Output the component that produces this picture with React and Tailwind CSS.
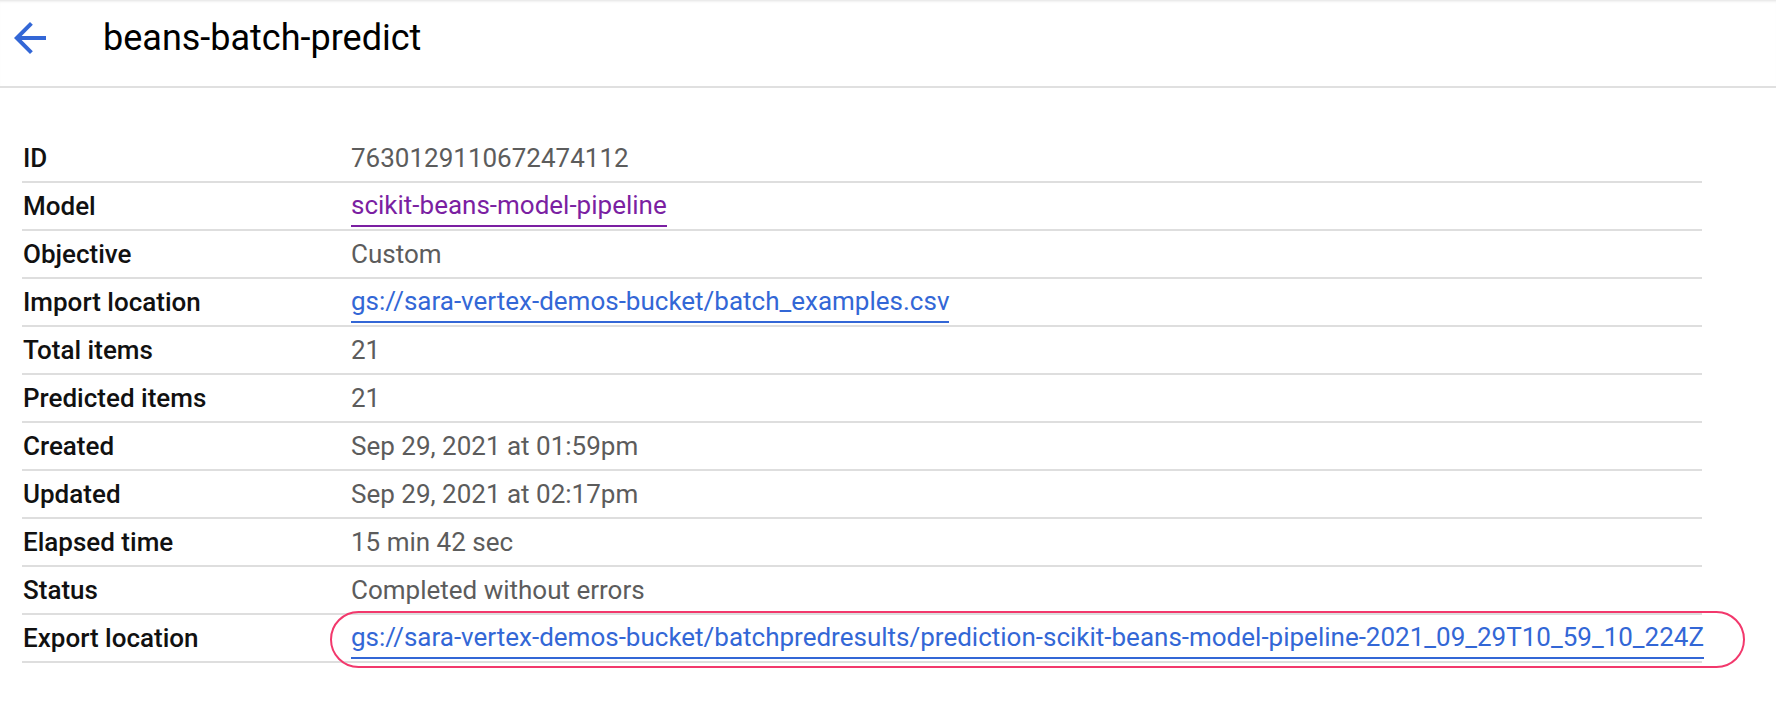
import React from 'react';

const rows = [
    { label: 'ID', value: '7630129110672474112' },
    { label: 'Model', value: 'scikit-beans-model-pipeline', link: 'visited' },
    { label: 'Objective', value: 'Custom' },
    { label: 'Import location', value: 'gs://sara-vertex-demos-bucket/batch_examples.csv', link: 'blue' },
    { label: 'Total items', value: '21' },
    { label: 'Predicted items', value: '21' },
    { label: 'Created', value: 'Sep 29, 2021 at 01:59pm' },
    { label: 'Updated', value: 'Sep 29, 2021 at 02:17pm' },
    { label: 'Elapsed time', value: '15 min 42 sec' },
    { label: 'Status', value: 'Completed without errors' },
    {
        label: 'Export location',
        value: 'gs://sara-vertex-demos-bucket/batchpredresults/prediction-scikit-beans-model-pipeline-2021_09_29T10_59_10_224Z',
        link: 'blue',
        circled: true,
    },
];

const Value = ({ row }) => {
    if (row.link === 'visited') {
        return <a href="#model" className="text-[#7b1fa2] border-b-2 border-[#7b1fa2]">{row.value}</a>;
    }
    if (row.link === 'blue') {
        return <a href="#gcs" className="text-[#3367d6] border-b-2 border-[#3367d6] whitespace-nowrap">{row.value}</a>;
    }
    return <span className="text-[#5c5c5c]">{row.value}</span>;
};

const App = () => {
    return (
        <div className="w-[1776px] h-[712px] bg-white font-['Roboto','Liberation_Sans',sans-serif] overflow-hidden">
            {/* Header */}
            <header className="h-[88px] border-b-2 border-[#e0e0e0] shadow-[inset_0_3px_3px_-2px_rgba(0,0,0,0.12)]">
                <div className="flex items-center h-[76px] pl-[6px]">
                    <svg width="48" height="48" viewBox="0 0 24 24" fill="#3367d6">
                        <path d="M20 11H7.83l5.59-5.59L12 4l-8 8 8 8 1.41-1.41L7.83 13H20v-2z" />
                    </svg>
                    <h1 className="ml-[49px] text-[36px] text-black leading-none">beans-batch-predict</h1>
                </div>
            </header>

            {/* Details table */}
            <div className="mt-[47px] ml-[22px] w-[1680px]">
                {rows.map((row) => (
                    <div key={row.label} className="grid grid-cols-[329px_1fr] h-[48px] border-b-2 border-[#dedede] text-[26px]">
                        <div className="flex items-center pl-[1px] font-medium text-[#111]">{row.label}</div>
                        <div className="relative flex items-center">
                            <Value row={row} />
                            {row.circled && (
                                <span className="absolute -left-[21px] -right-[41px] -top-[4px] -bottom-[7px] rounded-full border-2 border-[#f2386c]" />
                            )}
                        </div>
                    </div>
                ))}
            </div>
        </div>
    );
};

export default App;
